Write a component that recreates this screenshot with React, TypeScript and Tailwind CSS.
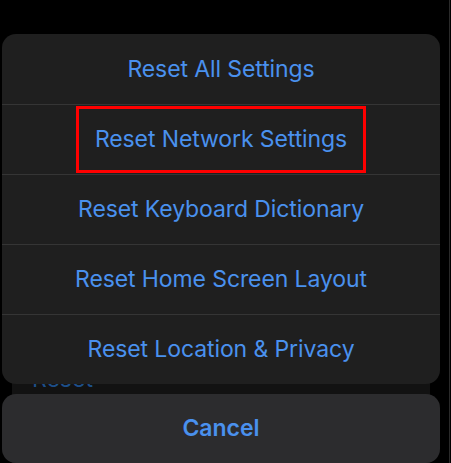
import React from 'react';

const items = [
  'Reset All Settings',
  'Reset Network Settings',
  'Reset Keyboard Dictionary',
  'Reset Home Screen Layout',
  'Reset Location & Privacy',
];

const App: React.FC = () => {
  return (
    <div
      className="relative h-[463px] w-[451px] overflow-hidden bg-black"
      style={{ fontFamily: 'Inter, "Noto Sans", sans-serif' }}
    >
      {/* dimmed settings card behind the action sheet */}
      <div className="absolute left-[12px] right-[21px] top-[340px] bottom-0 bg-[#121212] pl-[20px] pt-[26px]">
        <div className="text-[23px] leading-[27px] text-[#1d4f8a]">Reset</div>
      </div>
      <div className="absolute right-[1px] top-0 bottom-0 w-px bg-[#2a2a2a]" />

      <div className="relative flex flex-col gap-[10px] pl-[2px] pr-[11px] pt-[34px]">
        <div className="overflow-hidden rounded-[14px] bg-[#1f1f1f]">
          {items.map((label, i) => (
            <div
              key={label}
              className={`relative flex h-[70px] items-center justify-center text-[23px] tracking-[-0.1px] text-[#4a91ee] ${
                i > 0 ? 'border-t border-[#353535]' : ''
              }`}
            >
              {label}
              {i === 1 && (
                <div className="absolute left-[74px] top-[1px] h-[67px] w-[290px] border-[3px] border-[#ff0000]" />
              )}
            </div>
          ))}
        </div>
        <div className="flex h-[69px] items-center justify-center rounded-[14px] bg-[#2c2c2e] text-[23px] font-semibold text-[#4a91ee]">
          Cancel
        </div>
      </div>
    </div>
  );
};

export default App;
